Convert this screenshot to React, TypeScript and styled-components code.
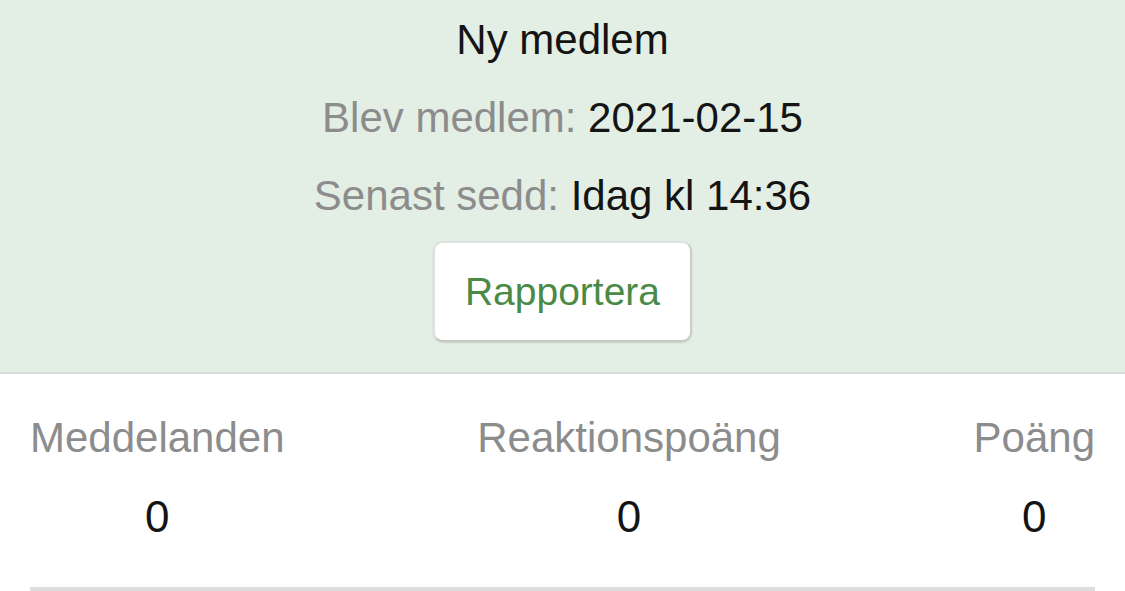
import styled, { createGlobalStyle } from "styled-components";

const GlobalStyle = createGlobalStyle`
  body {
    margin: 0;
    background: #fff;
    font-family: "Liberation Sans", Arial, sans-serif;
  }
`;

const StyledPage = styled.div`
  width: 1125px;
`;

const StyledHeader = styled.div`
  background: #e3eee5;
  border-bottom: 2px solid #d7dcd8;
  display: flex;
  flex-direction: column;
  align-items: center;
  padding: 1px 0 30px;
`;

const StyledTitle = styled.div`
  font-size: 42px;
  line-height: 78px;
  color: #141414;
`;

const StyledInfo = styled.div`
  font-size: 42px;
  line-height: 78px;
  color: #141414;
`;

const StyledMuted = styled.span`
  color: #8c8c8c;
`;

const StyledReportButton = styled.button`
  margin-top: 6px;
  width: 259px;
  height: 101px;
  background: #fff;
  border: 2px solid #e0e2e0;
  border-right-color: #cbcdcb;
  border-bottom-color: #c6c8c6;
  border-radius: 10px;
  box-shadow: 0 1px 2px rgba(0, 0, 0, 0.12);
  font-family: inherit;
  font-size: 39px;
  color: #4a8a46;
  padding: 0;
`;

const StyledStats = styled.div`
  display: flex;
  justify-content: space-between;
  padding: 40px 30px 0;
`;

const StyledStat = styled.div`
  display: flex;
  flex-direction: column;
  align-items: center;
  gap: 30px;
`;

const StyledStatLabel = styled.div`
  font-size: 42px;
  line-height: 48px;
  color: #8c8c8c;
`;

const StyledStatValue = styled.div`
  font-size: 44px;
  line-height: 50px;
  color: #141414;
`;

const StyledDivider = styled.div`
  margin: 45px 30px 0;
  height: 4px;
  background: #dddddd;
`;

const stats = [
  { label: "Meddelanden", value: 0 },
  { label: "Reaktionspoäng", value: 0 },
  { label: "Poäng", value: 0 },
];

const App = () => {
  return (
    <StyledPage>
      <GlobalStyle />
      <StyledHeader>
        <StyledTitle>Ny medlem</StyledTitle>
        <StyledInfo>
          <StyledMuted>Blev medlem:</StyledMuted> 2021-02-15
        </StyledInfo>
        <StyledInfo>
          <StyledMuted>Senast sedd:</StyledMuted> Idag kl 14:36
        </StyledInfo>
        <StyledReportButton>Rapportera</StyledReportButton>
      </StyledHeader>
      <StyledStats>
        {stats.map((s) => (
          <StyledStat key={s.label}>
            <StyledStatLabel>{s.label}</StyledStatLabel>
            <StyledStatValue>{s.value}</StyledStatValue>
          </StyledStat>
        ))}
      </StyledStats>
      <StyledDivider />
    </StyledPage>
  );
};

export default App;
